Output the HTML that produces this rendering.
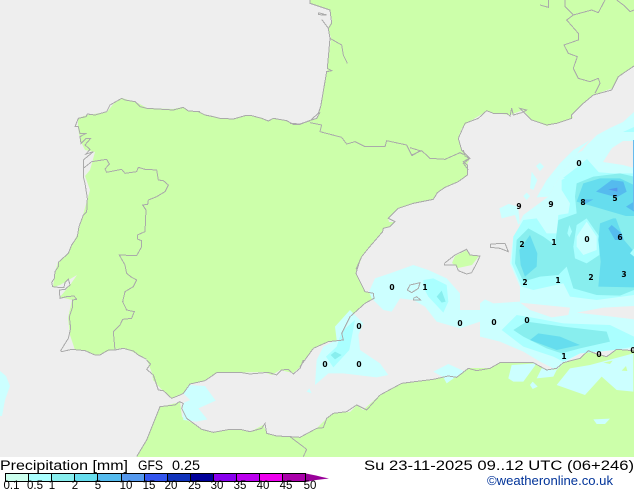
<!DOCTYPE html>
<html>
<head>
<meta charset="utf-8">
<style>
html,body{margin:0;padding:0;background:#fff;width:634px;height:490px;overflow:hidden}
svg{display:block}
polygon{stroke:none}
.c polyline{fill:none;stroke:#aaaaaa;stroke-width:3}
.l text{font:bold 7.5px "DejaVu Sans",sans-serif;text-anchor:middle;fill:#000}
.s text{font:11.5px "Liberation Sans",sans-serif;fill:#000;text-anchor:middle}
.t{font-family:"Liberation Sans",sans-serif;font-size:13.5px;fill:#000}
</style>
</head>
<body>
<svg width="634" height="490" viewBox="0 0 634 490" xmlns="http://www.w3.org/2000/svg">
<rect width="634" height="457" fill="#eeeeee"/>
<g fill="#ccffaa">
<polygon points="122,98 138,103 147,108 173,109 183,107 188,111 198,112 205,115 213,116 220,118 233,119 245,116 252,116 262,118 268,121 273,118 287,121 293,124 300,124 308,121 317,118 320,110 327,72 331,38 328,28 332,20 330,10 310,3 310,0 634,0 634,66 620,75 613,88 593,95 583,103 572,115 573,118 557,123 547,126 532,120 523,110 510,115 493,113 487,111 467,123 462,128 458,138 462,150 470,158 467,165 467,175 458,182 445,187 437,193 433,199 413,203 398,208 388,218 389,222 395,222 390,227 383,228 383,232 368,248 362,257 356,273 365,292 373,293 374,298 365,303 350,318 342,333 343,340 328,342 313,348 300,367 293,373 280,370 272,375 263,372 217,373 205,381 190,384 183,393 172,398 163,391 153,380 152,373 147,360 133,352 123,348 115,349 97,355 85,351 75,350 70,335 68,318 72,300 60,297 70,285 77,275 60,285 53,287 55,272 58,262 68,253 78,233 83,215 90,190 85,176 90,170 95,152 85,150 80,140 78,127 78,118 87,115 107,112 115,102"/>
<polygon points="137,457 147,440 160,407 180,402 182,417 202,429 213,432 230,429 240,429 250,432 263,425 267,433 277,436 290,437 300,437 317,428 325,420 333,413 350,412 357,405 363,410 380,395 402,383 433,379 448,376 457,377 468,368 490,368 500,363 533,363 547,370 557,368 563,363 580,358 588,351 607,357 617,349 634,351 634,457"/>
<polygon points="452,263 455,256 467,250 470,255 479,256 472,265 458,268"/>
</g>

<!-- precipitation north-east tail -->
<polygon fill="#ccffff" points="634,112 623,122 610,128 597,135 587,145 580,153 575,158 566,168 590,175 634,175"/>
<polygon fill="#aaffff" points="634,127 623,132 634,132"/>
<polygon fill="#aaffff" points="586,153 590,150 596,154 591,158"/>

<!-- precipitation east -->
<g transform="translate(480,140) scale(.33333)">
<polygon fill="#ccffff" points="462,0 410,10 375,30 330,20 310,40 300,30 245,100 205,170 130,225 115,255 105,225 65,235 58,205 100,185 115,205 120,260 100,290 90,370 120,440 120,485 40,490 15,478 0,490 0,590 60,605 130,635 180,665 230,690 250,670 300,640 462,625 462,0"/>
<polygon fill="#eeeeee" points="120,488 270,503 265,525 215,532 150,510"/>
<polygon fill="#eeeeee" points="290,518 370,503 462,498 462,538 380,528"/>
<polygon fill="#eeeeee" points="369,66 396,24 429,3 462,3 462,84 429,75"/>
<polygon fill="#eeeeee" points="330,0 280,0 310,30 240,70 200,120 170,170 130,205 65,185 130,120 150,90 220,30 300,0"/>
<polygon fill="#ccffff" points="330,0 300,30 245,100 205,170 170,172 200,120 240,70 280,30"/>
<polygon fill="#ccffff" points="150,145 155,95 172,120 160,150"/>
<polygon fill="#ccffff" points="168,78 180,68 192,80 180,93"/>
<polygon fill="#ccffff" points="130,168 140,158 150,168 140,180"/>
<polygon fill="#aaffff" points="249,114 300,75 321,57 369,111"/>
<polygon fill="#aaffff" points="245,120 280,100 330,95 400,100 462,100 462,465 350,480 270,470 250,430 160,450 125,440 95,370 100,290 130,240 170,235 200,280 230,280 235,225 265,220 270,190 245,150"/>
<polygon fill="#88eeee" points="290,130 340,110 420,100 462,110 462,450 420,467 350,465 280,445 260,380 235,405 180,410 130,425 105,370 110,300 145,265 190,290 225,315 235,240 290,220 285,170"/>
<polygon fill="#aaffff" points="262,280 268,255 276,275 268,292"/>
<polygon fill="#aaffff" points="280,320 290,255 320,235 358,290 358,345 320,370 285,355"/>
<polygon fill="#ccffff" points="290,290 320,245 350,290 350,330 310,345 290,320"/>
<polygon fill="#66ddee" points="290,185 310,130 360,115 420,115 462,135 462,235 400,235 360,250 355,300 362,365 355,440 462,442 462,330 430,290 462,235"/>
<polygon fill="#88eeee" points="405,228 462,228 462,335 432,300"/>
<polygon fill="#aaffff" points="450,340 462,325 462,350"/>
<polygon fill="#66ddee" points="118,330 150,285 172,340 170,380 135,410 122,375"/>
<polygon fill="#55bbee" points="348,155 395,120 430,125 440,155 410,172"/>
<polygon fill="#55bbee" points="310,178 340,178 310,195"/>
<polygon fill="#55bbee" points="385,265 395,255 425,280 430,300 405,300"/>
<polygon fill="#55bbee" points="438,200 462,185 462,215"/>
<polygon fill="#5599ee" points="385,148 412,143 412,155"/>
<!-- lower band -->
<polygon fill="#aaffff" points="65,570 110,525 140,530 250,550 390,555 462,590 462,620 400,630 300,640 250,665 220,650 130,620"/>
<polygon fill="#88eeee" points="100,570 140,545 250,560 380,575 390,605 300,625 245,640 200,625 130,590"/>
<polygon fill="#66ddee" points="150,600 175,580 240,590 300,615 230,630"/>
</g>
<rect x="633" y="140" width="1" height="70" fill="#66bbee"/>

<!-- precipitation middle -->
<g transform="translate(300,260) scale(.33333)">
<polygon fill="#ccffff" points="207,95 225,55 270,40 340,15 385,30 440,55 480,100 480,150 540,150 540,185 480,205 410,185 375,140 340,120 300,115 275,155 250,150 215,115"/>
<polygon fill="#aaffff" points="370,60 400,55 440,75 445,125 430,158 385,110 372,85"/>
<polygon fill="#88eeee" points="410,110 425,92 437,125 425,128"/>
<polygon fill="#ccffff" points="150,150 190,190 175,225 180,270 240,310 265,345 230,352 130,340 85,340 45,375 50,300 70,260 110,240 105,200"/>
<polygon fill="#aaffff" points="165,180 148,270 100,322 78,290 110,260 125,215"/>
<polygon fill="#88eeee" points="92,285 105,275 125,285 105,298"/>
</g>

<!-- precipitation west -->
<g transform="translate(130,360) scale(.33333)">
<polygon fill="#ccffff" points="160,100 175,75 225,78 257,122 205,145 232,178 200,185 160,180 158,130 180,120"/>
<polygon fill="#ccffff" points="530,95 538,85 545,100"/>
</g>
<polygon fill="#ccffff" points="0,371 6,376 10,386 5,400 2,416 0,416"/>

<!-- precipitation over africa -->
<g transform="translate(380,340) scale(.33333)" fill="#ccffff">
<polygon points="160,95 205,72 255,95 225,112 200,130 190,112"/>
<polygon points="385,115 395,75 470,70 430,125 400,125"/>
<polygon points="470,115 485,85 530,90 520,110"/>
<polygon points="450,135 458,125 473,140 458,147"/>
<polygon points="530,135 570,85 630,75 760,40 760,155 710,150 665,110 615,165"/>
<polygon points="640,238 690,236 675,252 650,252"/>
</g>
<g transform="translate(380,340) scale(.33333)" fill="#ccffaa">
<polygon points="670,68 698,62 690,72"/>
<polygon points="725,92 738,78 742,93"/>
</g>

<!-- outlines -->
<g class="c" shape-rendering="crispEdges">
<g transform="translate(190,95) scale(.33333)">
<polyline points="0,48 25,50 45,60 70,65 90,70 130,72 165,62 185,62 215,70 235,78 250,70 290,77 310,88 330,88 355,78 380,70 390,52"/>
</g>
<g transform="translate(350,150) scale(.33333)">
<polyline points="340,0 345,18 358,25 340,35 352,45 352,75 325,95 285,112 262,128 250,148 190,160 145,175 115,205 135,215 120,230 100,235 98,245 55,295 35,320 18,358"/>
</g>
<g transform="translate(430,230) scale(.33333)">
<polyline points="43,100 75,75 110,58 120,75 150,78 140,100 125,128 110,132 85,122 78,105 43,105 43,100"/>
</g>
<g transform="translate(480,140) scale(.33333)">
<polyline points="32,312 75,310 85,335 60,325 32,322 32,312"/>
</g>
<g transform="translate(300,260) scale(.33333)">
<polyline points="180,0 168,40 195,95 220,100 222,115 195,130 150,170 125,220 130,240 85,245 40,265 0,320"/>
<polyline points="322,90 330,75 360,68 355,85 335,98 322,90"/>
<polyline points="340,115 350,110 362,120 340,120 340,115"/>
</g>
<g transform="translate(0,90) scale(.33333)">
<polyline points="440,808 415,795 400,783 370,775 345,780 325,780 300,795 285,795 255,782 215,778 185,785 182,782 205,745 212,715 208,680 218,650 218,630 230,628 222,618 200,620 180,625 178,600 195,598 210,585 205,567 195,578 192,592 175,592 158,590 155,578 163,565 165,545 175,530 175,517 205,490 215,465 232,440 237,410 250,375 260,365 262,325 255,280 250,260 250,210 280,185 258,192 270,178 255,165 272,145 258,145 243,160 240,140 258,130 240,130 235,110 225,110 235,85 258,80 262,72 285,75 320,65 330,45 365,25 375,30 405,35 420,50 440,55 473,57 520,60 550,52 565,63 600,65"/>
<polyline points="250,235 275,215 320,208 328,222 315,237 320,247 365,238 375,250 410,245 415,232 435,238 470,240 475,270 490,272 505,285 495,305 470,320 445,330 443,343 428,345 438,360 435,425 412,435 412,447 425,452 425,470 410,497 358,495 375,525 380,550 392,560 410,570 400,590 375,605 368,635 380,660 403,665 395,685 368,688 360,705 340,725 345,780"/>
</g>
<g transform="translate(290,0) scale(.33333)">
<polyline points="0,370 30,372 60,362 85,340 92,320 110,215 125,212 112,205 120,115 155,135 160,165 172,190"/>
<polyline points="120,115 115,85 125,70 120,30 60,10 60,0"/>
<polyline points="95,58 115,85"/>
<polyline points="85,38 110,45 85,44 85,38"/>
<polyline points="60,368 95,375 90,395 155,412 170,432 195,425 225,440 285,440 290,422 350,435 365,465 395,452 420,475 465,478 510,458 525,465"/>
<polyline points="360,443 390,452 365,468"/>
<polyline points="505,415 525,370 565,355 590,332 610,340 650,340 660,348 665,325 670,345 695,338 710,330 690,325 710,345 725,360 770,375 800,370 845,355 845,345 880,310 910,285 965,270 985,230 1032,198"/>
<polyline points="535,510 520,490 540,475 515,450 505,415"/>
<polyline points="825,0 825,20 850,45 905,30 925,38 945,0"/>
<polyline points="850,45 830,60 865,100 865,120 822,135 835,160 862,170 850,205 865,235 900,245 925,235 930,250 915,280"/>
<polyline points="750,15 775,22 775,0"/>
<polyline points="980,0 1000,15 1020,35 1032,30"/>
</g>
<g transform="translate(130,360) scale(.33333)">
<polyline points="50,0 62,12 50,28 70,45 75,60 85,90 100,92 125,115 150,105 160,100 180,72 225,62 260,38 330,37 360,42 415,37 440,45 455,30 475,28 490,42 510,25 520,0"/>
<polyline points="20,290 50,240 90,140 135,135 148,125 160,130 155,145 170,175 215,208 250,217 300,208 330,208 360,215 395,205 405,190 410,220 440,228 480,230 510,232 560,205 580,203 590,175 610,160 650,155 680,135 710,150 750,105"/>
<polyline points="480,230 530,268 520,290"/>
</g>
<g transform="translate(380,340) scale(.33333)">
<polyline points="0,165 65,130 160,118 205,108 230,112 265,85 290,92 330,85 360,68 460,68 500,90 530,85 550,68 600,55 625,32 650,42 680,50 710,28 760,32"/>
</g>
</g>

<!-- map labels -->
<g class="l">
<text x="579" y="166">0</text>
<text x="615" y="201">5</text>
<text x="583" y="205">8</text>
<text x="519" y="209">9</text>
<text x="551" y="207">9</text>
<text x="620" y="240">6</text>
<text x="587" y="242">0</text>
<text x="522" y="247">2</text>
<text x="554" y="245">1</text>
<text x="624" y="277">3</text>
<text x="591" y="280">2</text>
<text x="558" y="283">1</text>
<text x="525" y="285">2</text>
<text x="527" y="323">0</text>
<text x="494" y="325">0</text>
<text x="564" y="359">1</text>
<text x="599" y="357">0</text>
<text x="633" y="353">0</text>
<text x="392" y="290">0</text>
<text x="425" y="290">1</text>
<text x="460" y="326">0</text>
<text x="359" y="329">0</text>
<text x="325" y="367">0</text>
<text x="359" y="367">0</text>
</g>

<rect y="457" width="634" height="33" fill="#fff"/>
<text class="t" x="0" y="470" textLength="128" lengthAdjust="spacingAndGlyphs">Precipitation [mm]</text>
<text class="t" x="138" y="470" textLength="25" lengthAdjust="spacingAndGlyphs">GFS</text>
<text class="t" x="172" y="470" textLength="28" lengthAdjust="spacingAndGlyphs">0.25</text>
<text class="t" x="364" y="470" textLength="270" lengthAdjust="spacingAndGlyphs">Su 23-11-2025 09..12 UTC (06+246)</text>
<text x="487" y="485" textLength="126" lengthAdjust="spacingAndGlyphs" style="font:12.5px 'Liberation Sans',sans-serif;fill:#003399">©weatheronline.co.uk</text>

<!-- colour bar -->
<g shape-rendering="crispEdges">
<rect x="5" y="473" width="23" height="8" fill="#ccffee"/>
<rect x="28" y="473" width="23" height="8" fill="#aaffff"/>
<rect x="51" y="473" width="23" height="8" fill="#88eeee"/>
<rect x="74" y="473" width="23" height="8" fill="#66ddee"/>
<rect x="97" y="473" width="24" height="8" fill="#55bbee"/>
<rect x="121" y="473" width="23" height="8" fill="#5599ee"/>
<rect x="144" y="473" width="23" height="8" fill="#3355ee"/>
<rect x="167" y="473" width="23" height="8" fill="#1133bb"/>
<rect x="190" y="473" width="23" height="8" fill="#000099"/>
<rect x="213" y="473" width="23" height="8" fill="#8800ee"/>
<rect x="236" y="473" width="23" height="8" fill="#bb00ee"/>
<rect x="259" y="473" width="23" height="8" fill="#ee00ee"/>
<rect x="282" y="473" width="23" height="8" fill="#aa00aa"/>
<g stroke="#000" stroke-width="1" fill="none">
<rect x="5.5" y="473.5" width="300" height="8"/>
<path d="M28.5 473V481M51.5 473V481M74.5 473V481M97.5 473V481M121.5 473V481M144.5 473V481M167.5 473V481M190.5 473V481M213.5 473V481M236.5 473V481M259.5 473V481M282.5 473V481"/>
</g>
</g>
<polygon fill="#990099" points="306,473.5 316,475.5 322,477 329,478.5 316,480 306,482"/>
<g class="s">
<text x="11.5" y="489">0.1</text>
<text x="35" y="489">0.5</text>
<text x="52" y="489">1</text>
<text x="75" y="489">2</text>
<text x="98" y="489">5</text>
<text x="126" y="489">10</text>
<text x="149" y="489">15</text>
<text x="171" y="489">20</text>
<text x="194.5" y="489">25</text>
<text x="217" y="489">30</text>
<text x="240" y="489">35</text>
<text x="263" y="489">40</text>
<text x="286" y="489">45</text>
<text x="310" y="489">50</text>
</g>
</svg>
</body>
</html>
